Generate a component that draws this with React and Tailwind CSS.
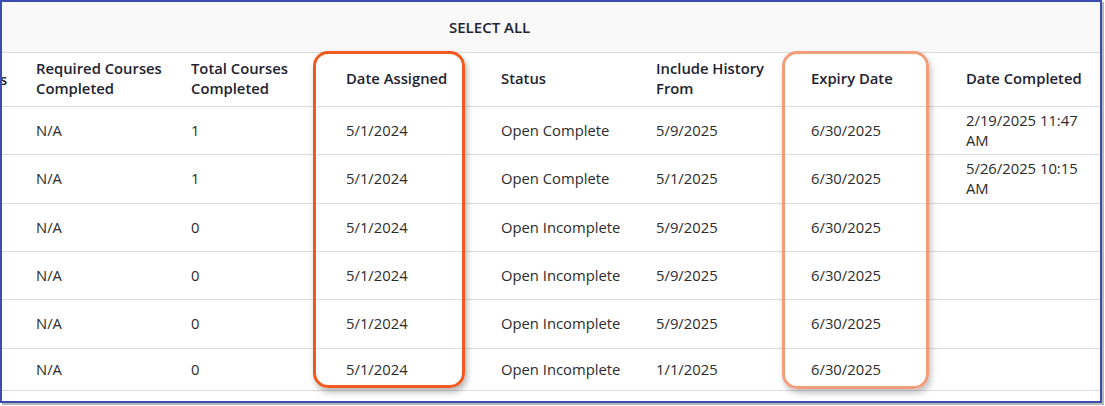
import React from "react";

const headers = [
  ["Required Courses", "Completed"],
  ["Total Courses", "Completed"],
  ["Date Assigned"],
  ["Status"],
  ["Include History", "From"],
  ["Expiry Date"],
  ["Date Completed"],
];

const rows = [
  { h: "h-[48px]", c: ["N/A", "1", "5/1/2024", "Open Complete", "5/9/2025", "6/30/2025", "2/19/2025 11:47 AM"] },
  { h: "h-[49px]", c: ["N/A", "1", "5/1/2024", "Open Complete", "5/1/2025", "6/30/2025", "5/26/2025 10:15 AM"] },
  { h: "h-[48px]", c: ["N/A", "0", "5/1/2024", "Open Incomplete", "5/9/2025", "6/30/2025", ""] },
  { h: "h-[48px]", c: ["N/A", "0", "5/1/2024", "Open Incomplete", "5/9/2025", "6/30/2025", ""] },
  { h: "h-[49px]", c: ["N/A", "0", "5/1/2024", "Open Incomplete", "5/9/2025", "6/30/2025", ""] },
  { h: "h-[42px]", c: ["N/A", "0", "5/1/2024", "Open Incomplete", "1/1/2025", "6/30/2025", ""] },
];

export default function App() {
  return (
    <div className="w-[1105px] h-[406px] bg-white" style={{ fontFamily: '"Open Sans", "Noto Sans", sans-serif' }}>
      <div className="relative w-[1102px] h-[403px] border-2 border-[#3b4db3] bg-white overflow-hidden shadow-[2px_2px_0_#b8b8b8]">
        <div className="h-[51px] bg-[#f8f8f8] border-b border-[#dcdcdc] flex items-center">
          <span className="ml-[447px] text-[15px] font-semibold text-[#1e2230]">SELECT ALL</span>
        </div>
        <div className="h-[54px] flex border-b border-[#dcdcdc] text-[14.8px] font-semibold text-[#1e2230] leading-[20px]">
          <div className="w-[18px] shrink-0 flex items-center overflow-hidden pb-[2px]">
            <span className="-ml-[2px]">s</span>
          </div>
          {headers.map((h, i) => (
            <div key={i} className="w-[155px] shrink-0 pl-[16px] pr-[16px] pb-[3px] flex flex-col justify-center">
              {h.map((l, j) => (
                <div key={j} className="whitespace-nowrap">{l}</div>
              ))}
            </div>
          ))}
        </div>
        {rows.map((r, i) => (
          <div key={i} className={`${r.h} flex border-b border-[#dcdcdc] text-[14.8px] text-[#2b2b2b] leading-[20px]`}>
            <div className="w-[18px] shrink-0" />
            {r.c.map((c, j) => (
              <div key={j} className="w-[155px] shrink-0 pl-[16px] pr-[16px] pb-[2px] flex items-center">
                <span>{c}</span>
              </div>
            ))}
          </div>
        ))}
        <div className="absolute left-[311px] top-[49px] w-[152px] h-[337px] border-[3px] border-[#f25a1d] rounded-[15px] shadow-[2px_4px_6px_rgba(0,0,0,0.3)]" />
        <div className="absolute left-[780px] top-[49px] w-[147px] h-[338px] border-[3px] border-[#f29c7a] rounded-[15px] shadow-[2px_4px_6px_rgba(0,0,0,0.25)]" />
      </div>
    </div>
  );
}
